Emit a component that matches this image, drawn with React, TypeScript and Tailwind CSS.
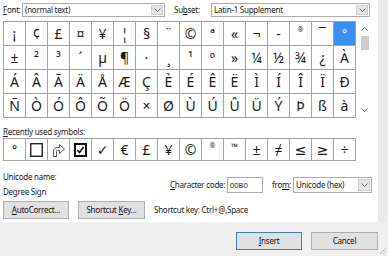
import React from 'react';

const rows: string[][] = [
  ['¡', '¢', '£', '¤', '¥', '¦', '§', '¨', '©', 'ª', '«', '¬', '-', '®', '¯', '°'],
  ['±', '²', '³', '´', 'µ', '¶', '·', '¸', '¹', 'º', '»', '¼', '½', '¾', '¿', 'À'],
  ['Á', 'Â', 'Ã', 'Ä', 'Å', 'Æ', 'Ç', 'È', 'É', 'Ê', 'Ë', 'Ì', 'Í', 'Î', 'Ï', 'Ð'],
  ['Ñ', 'Ò', 'Ó', 'Ô', 'Õ', 'Ö', '×', 'Ø', 'Ù', 'Ú', 'Û', 'Ü', 'Ý', 'Þ', 'ß', 'à'],
];

const recent: string[] = ['°', 'box', 'arrow', 'check', '✓', '€', '£', '¥', '©', '®', '™', '±', '≠', '≤', '≥', '÷'];

function Chevron({ up }: { up?: boolean }) {
  return (
    <svg width="7" height="4" viewBox="0 0 7 4">
      <path
        d={up ? 'M0.5 3.5 L3.5 0.5 L6.5 3.5' : 'M0.5 0.5 L3.5 3.5 L6.5 0.5'}
        fill="none"
        stroke="#6a6a6a"
        strokeWidth="1"
      />
    </svg>
  );
}

function Glyph({ ch, selected }: { ch: string; selected?: boolean }) {
  if (ch === '®') {
    return <span className="text-[7px] leading-none -mt-[8px]">®</span>;
  }
  if (ch === '™') {
    return <span className="text-[9px] leading-none -mt-[6px]">™</span>;
  }
  if (ch === '°') {
    return <span className={`text-[12px] leading-none ${selected ? 'text-white' : ''}`}>°</span>;
  }
  if (ch === 'box') {
    return (
      <svg width="13" height="14" viewBox="0 0 13 14">
        <rect x="0.75" y="0.75" width="11.5" height="12.5" fill="none" stroke="#111" strokeWidth="1.3" />
      </svg>
    );
  }
  if (ch === 'arrow') {
    return (
      <svg width="15" height="15" viewBox="0 0 15 15">
        <path
          d="M2.5 14.5 V9.5 C2.5 7 4 5.5 6.5 5.5 H8.5 V2.5 L13.5 7 L8.5 11.5 V8.5 H6.5 C5.5 8.5 5.5 9 5.5 9.5 V14.5 Z"
          fill="none"
          stroke="#444"
          strokeWidth="0.9"
        />
      </svg>
    );
  }
  if (ch === 'check') {
    return (
      <svg width="13" height="14" viewBox="0 0 13 14">
        <rect x="1" y="1" width="11" height="12" fill="none" stroke="#111" strokeWidth="2" />
        <path d="M3.5 7 L5.5 9.5 L9.5 4" fill="none" stroke="#111" strokeWidth="1.6" />
      </svg>
    );
  }
  return <span className={selected ? 'text-white' : ''}>{ch}</span>;
}

function Cell({ ch, selected, tall }: { ch: string; selected?: boolean; tall?: boolean }) {
  return (
    <div
      className={`w-[22px] ${tall ? 'h-[24px]' : 'h-[22px]'} border-r border-b border-[#a3a3a3] flex items-center justify-center text-[14px] leading-none tracking-normal text-[#1a1a1a] ${
        selected ? 'bg-[#3c8ff0]' : ''
      }`}
    >
      <Glyph ch={ch} selected={selected} />
    </div>
  );
}

function Select({ text, className }: { text: string; className: string }) {
  return (
    <div className={`${className} border border-[#acacac] bg-white flex items-stretch`}>
      <div className="flex-1 pl-[2px] flex items-center text-[#222] whitespace-nowrap">{text}</div>
      <div className="w-[12px] m-[1px] bg-[#e6e6e6] border border-[#cfcfcf] flex items-center justify-center">
        <Chevron />
      </div>
    </div>
  );
}

function Button({ children, className, primary }: { children: React.ReactNode; className: string; primary?: boolean }) {
  return (
    <div
      className={`${className} h-[18px] bg-[#e1e1e1] border ${
        primary ? 'border-[#3c7fc4]' : 'border-[#adadad]'
      } flex items-center justify-center text-[#111] whitespace-nowrap`}
    >
      {children}
    </div>
  );
}

export default function App() {
  return (
    <div className="w-[388px] h-[256px] bg-[#f0f0f0] flex flex-col overflow-hidden font-['Noto_Sans','DejaVu_Sans',sans-serif] text-[8px] tracking-[-0.25px] leading-[12px] text-[#1a1a1a]">
      <div className="h-[222px] flex">
        <div className="w-[378px] bg-white pl-[3px]">
          <div className="pt-[3px] flex items-center h-[17px]">
            <span className="w-[19px]">
              <span className="underline">F</span>ont:
            </span>
            <Select text="(normal text)" className="w-[143px] h-[14px]" />
            <span className="w-[37px] ml-[9px]">
              Su<span className="underline">b</span>set:
            </span>
            <Select text="Latin-1 Supplement" className="w-[159px] h-[14px]" />
          </div>

          <div className="mt-[4px] flex">
            <div className="border-l border-t border-[#a3a3a3]">
              {rows.map((row, ri) => (
                <div key={ri} className="flex">
                  {row.map((ch, ci) => (
                    <Cell key={ci} ch={ch} tall selected={ri === 0 && ci === 15} />
                  ))}
                </div>
              ))}
            </div>
            <div className="w-[15px] ml-[1px] h-[97px] flex flex-col items-center">
              <div className="h-[13px] flex items-center justify-center pt-[2px]">
                <Chevron up />
              </div>
              <div className="w-[8px] h-[14px] mt-[2px] bg-[#cdcdcd]" />
              <div className="flex-1" />
              <div className="h-[10px] flex items-start justify-center">
                <Chevron />
              </div>
            </div>
          </div>

          <div className="mt-[8px] h-[12px]">
            <span className="underline">R</span>ecently used symbols:
          </div>
          <div className="flex border-l border-t border-[#a3a3a3] w-fit">
            {recent.map((ch, i) => (
              <Cell key={i} ch={ch} />
            ))}
          </div>

          <div className="mt-[10px] flex">
            <div className="w-[167px]">
              <div className="h-[12px]">Unicode name:</div>
              <div className="h-[12px] mt-[3px]">Degree Sign</div>
            </div>
            <div className="mt-[6px] flex items-center h-[16px]">
              <span className="w-[57px] whitespace-nowrap">
                <span className="underline">C</span>haracter code:
              </span>
              <div className="w-[36px] h-[16px] border border-[#acacac] bg-white pl-[2px] flex items-center text-[7.5px] tracking-normal">
                00B0
              </div>
              <span className="w-[21px] ml-[9px] whitespace-nowrap">
                fro<span className="underline">m</span>:
              </span>
              <Select text="Unicode (hex)" className="w-[79px] h-[16px]" />
            </div>
          </div>

          <div className="mt-[3px] flex items-center">
            <Button className="w-[66px]">
              <span className="underline">A</span>utoCorrect...
            </Button>
            <Button className="w-[67px] ml-[9px]">
              Shortcut <span className="underline ml-[2px]">K</span>ey...
            </Button>
            <span className="ml-[9px] whitespace-nowrap">Shortcut key: Ctrl+@,Space</span>
          </div>
        </div>
        <div className="flex-1 bg-[#ebebeb] border-l border-[#e2e2e2]" />
      </div>

      <div className="flex-1 relative flex justify-end items-start gap-[9px] pt-[10px] pr-[10px]">
        <Button className="w-[66px]" primary>
          <span className="underline">I</span>nsert
        </Button>
        <Button className="w-[67px]">Cancel</Button>
        <svg className="absolute right-[1px] bottom-[1px]" width="9" height="9" viewBox="0 0 9 9">
          <path d="M8 2 L2 8 M8 5 L5 8" stroke="#b5b5b5" strokeWidth="1" />
        </svg>
      </div>
    </div>
  );
}
